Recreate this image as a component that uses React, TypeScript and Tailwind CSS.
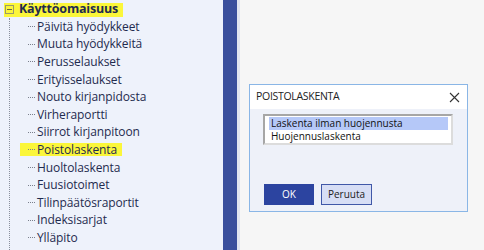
import React from "react";

const items = [
  "Päivitä hyödykkeet",
  "Muuta hyödykkeitä",
  "Perusselaukset",
  "Erityisselaukset",
  "Nouto kirjanpidosta",
  "Virheraportti",
  "Siirrot kirjanpitoon",
  "Poistolaskenta",
  "Huoltolaskenta",
  "Fuusiotoimet",
  "Tilinpäätösraportit",
  "Indeksisarjat",
  "Ylläpito",
];

export default function App() {
  return (
    <div
      className="flex w-[484px] h-[250px] overflow-hidden bg-[#f6f6f6]"
      style={{ fontFamily: '"Open Sans", "Noto Sans", sans-serif' }}
    >
      {/* Tree panel */}
      <div className="w-[223px] h-full bg-[#eef2fb] text-[#1f2b4f] shrink-0">
        <div className="h-[18px] flex items-center">
          <div className="ml-[4px] mt-[1px] h-[14px] flex items-center bg-[#fbf63a] pl-[1px] pr-[5px]">
            <div className="w-[9px] h-[9px] border border-[#9a9a6a] flex items-center justify-center mr-[5px]">
              <div className="w-[5px] h-px bg-[#6b6b40]" />
            </div>
            <span className="text-[12.5px] font-bold leading-none tracking-[-0.2px]">
              Käyttöomaisuus
            </span>
          </div>
        </div>
        <div className="ml-[9px] border-l border-dotted border-[#8a8f9c] h-[232px]">
          {items.map((t) => (
            <div key={t} className="h-[17.6px] flex items-center pl-[10px]">
              <div
                className={
                  "flex items-center h-[13px] pl-[8px] pr-[5px] " +
                  (t === "Poistolaskenta" ? "bg-[#fbf63a]" : "")
                }
              >
                <div className="w-[7px] border-t border-dotted border-[#7a7f8c]" />
                <span className="ml-[2px] text-[12px] leading-none tracking-[-0.1px]">
                  {t}
                </span>
              </div>
            </div>
          ))}
        </div>
      </div>
      {/* Blue bar */}
      <div className="w-[14px] h-full bg-[#3a4f9c] shrink-0" />
      <div className="w-[3px] h-full bg-[#e1e5ef] shrink-0" />
      {/* Main */}
      <div className="flex-1 h-full">
        <div className="ml-[9px] mt-[84px] w-[219px] h-[128px] border border-[#8ab6e6] flex flex-col bg-[#eef1f9]">
          <div className="h-[24px] bg-white flex items-center justify-between pl-[6px] pr-[7px] shrink-0">
            <span className="text-[10.5px] text-[#222] tracking-[-0.3px]">POISTOLASKENTA</span>
            <svg width="11" height="11" viewBox="0 0 11 11">
              <path d="M1 1 L10 10 M10 1 L1 10" stroke="#333" strokeWidth="1.1" />
            </svg>
          </div>
          <div className="flex-1 pl-[13px] pt-[5px]">
            <div className="w-[190px] h-[31px] border-2 border-t-[#a6a6a6] border-l-[#a6a6a6] border-r-[#dcdcdc] border-b-[#dcdcdc] bg-white pl-[4px] pr-[3px] pt-[1px]">
              <div className="h-[13px] bg-[#b5c8f8] flex items-center pl-[2px] text-[10px] text-[#111] leading-[13px]">
                Laskenta ilman huojennusta
              </div>
              <div className="h-[13px] flex items-center pl-[2px] text-[10px] text-[#111] leading-[13px]">
                Huojennuslaskenta
              </div>
            </div>
            <div className="flex gap-[7px] mt-[39px] ml-[1px]">
              <div className="w-[50px] h-[21px] bg-[#2c44a0] text-white text-[10px] flex items-center justify-center">
                OK
              </div>
              <div className="w-[51px] h-[21px] bg-[#d7def5] border border-[#4058a8] text-[#222] text-[10px] flex items-center justify-center">
                Peruuta
              </div>
            </div>
          </div>
        </div>
      </div>
    </div>
  );
}
